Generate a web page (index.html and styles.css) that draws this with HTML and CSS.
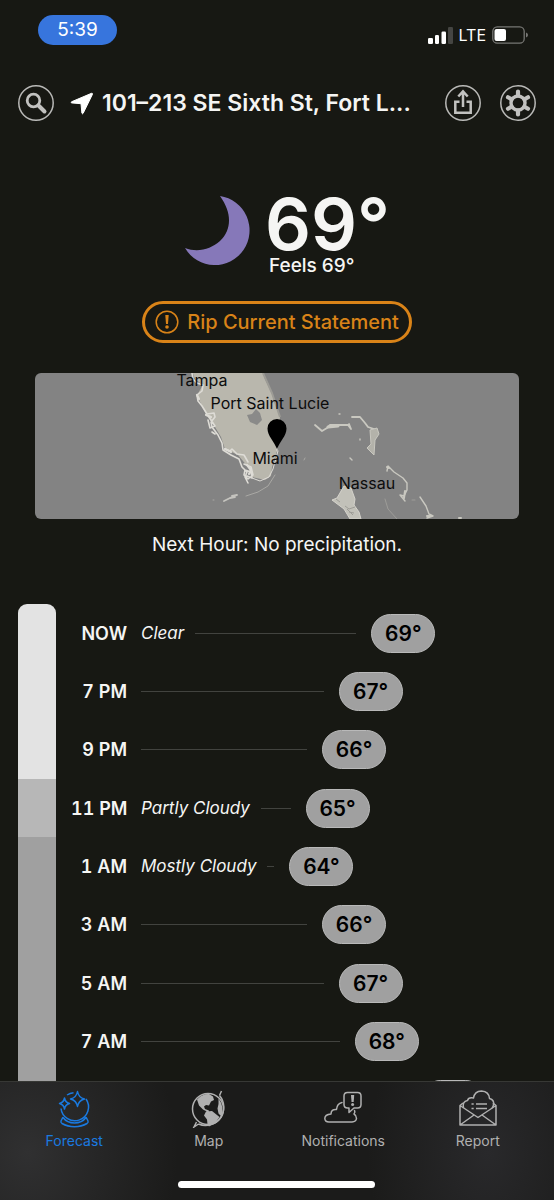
FILE: index.html
```html
<!DOCTYPE html>
<html lang="en">
<head>
<meta charset="utf-8">
<meta name="viewport" content="width=device-width, initial-scale=1">
<title>Forecast</title>
<link rel="stylesheet" href="styles.css">
</head>
<body>
<div class="app">
  <div class="status">
    <span class="clock">5:39</span>
    <div class="signals">
      <svg width="25" height="17" viewBox="0 0 25 17" aria-hidden="true">
        <rect x="0" y="11" width="5" height="6" rx="1.3" fill="#fff"/>
        <rect x="7" y="8" width="4" height="9" rx="1.3" fill="#fff"/>
        <rect x="13.500" y="4.500" width="4.500" height="12.500" rx="1.300" fill="#fff"/>
        <rect x="20" y="0" width="5" height="17" rx="1.3" fill="#454542"/>
      </svg>
      <span>LTE</span>
      <svg width="36" height="18" viewBox="0 0 36 18" aria-hidden="true">
        <rect x=".8" y=".8" width="31.400" height="16.400" rx="4.500" fill="none" stroke="#777774" stroke-width="1.300"/>
        <rect x="2.500" y="3" width="11.500" height="12" rx="2" fill="#fff"/>
        <path d="M34 6.500q2 .8 2 2.500t-2 2.500z" fill="#777774"/>
      </svg>
    </div>
  </div>

  <header class="top">
    <button class="round" aria-label="Search">
      <svg width="36" height="36" viewBox="0 0 36 36" aria-hidden="true"><circle cx="18" cy="18" r="17.200" fill="none" stroke="#b9b9b7" stroke-width="1.500"/><circle cx="15.500" cy="15.500" r="6.300" fill="none" stroke="#c2c2c0" stroke-width="2.800"/><path d="M20.500 20.500l6 6" stroke="#c2c2c0" stroke-width="4" stroke-linecap="round"/></svg>
    </button>
    <h1 class="place">
      <svg width="23" height="23" viewBox="0 0 23 23" aria-hidden="true"><path d="M21.500 1.300L1.500 9.800q-1 .7.200 1.100l9.300.8.900 9.500q.6 1.200 1.300 0L22.500 2.200q.2-1.100-1-.9z" fill="#fff" stroke="#fff"/></svg>
      <span>101–213 SE Sixth St, Fort L...</span>
    </h1>
    <button class="round" aria-label="Share">
      <svg width="36" height="36" viewBox="0 0 36 36" aria-hidden="true"><circle cx="18" cy="18" r="17.200" fill="none" stroke="#b9b9b7" stroke-width="1.500"/><path d="M14.500 16.800h-4.200v11h15.400v-11h-4.200M18 22V7M13.300 11.500L18 6.300l4.700 5.200" fill="none" stroke="#c2c2c0" stroke-width="2.500"/></svg>
    </button>
    <button class="round" aria-label="Settings">
      <svg width="36" height="36" viewBox="0 0 36 36" aria-hidden="true"><circle cx="18" cy="18" r="17.200" fill="none" stroke="#b9b9b7" stroke-width="1.500"/><g stroke="#c2c2c0" stroke-width="4.200" stroke-linecap="round"><path d="M18 6.500v4M18 25.500v4M8 12.250l3.500 2M24.500 21.750l3.500 2M8 23.750l3.500-2M24.500 14.250l3.500-2"/></g><circle cx="18" cy="18" r="7" fill="none" stroke="#c2c2c0" stroke-width="3.400"/></svg>
    </button>
  </header>

  <main class="content">
    <section class="current">
      <svg class="moon" width="68" height="72" viewBox="0 0 68 72" role="img" aria-label="Clear night"><path d="M36 0A34.700 34.700 0 1 1 1 52C14 57 27 53 36 45C48 33 48 17 36 0Z" fill="#8678b9"/></svg>
      <div class="reading">
        <span class="temp">69°</span>
        <span class="feels">Feels 69°</span>
      </div>
    </section>

    <button class="alert">
      <svg width="24" height="24" viewBox="0 0 24 24" aria-hidden="true"><circle cx="12" cy="12" r="10.800" fill="none" stroke="#d98318" stroke-width="1.500"/><path d="M10.300 5h3.400l-.7 9h-2z" fill="#d98318"/><circle cx="12" cy="17" r="1.800" fill="#d98318"/></svg>
      <span>Rip Current Statement</span>
    </button>

    <section class="radar">
      <svg class="map" viewBox="0 0 484 146" preserveAspectRatio="xMidYMid slice" role="img" aria-label="Precipitation map">
        <rect width="484" height="146" fill="#838383"/>
        <path d="M157-2L160 6 168 12 162 22 167 33 172 43 180 54 186 64 190 76 203 82 213 94 217 104 230 107 236 103 237 94 242 78 243 62 245 44 237 21 230 6 227-2z" fill="#b9b7ad"/>
        <path d="M228 0L237 20 245 44" fill="none" stroke="#9d9c96" stroke-width="2"/>
        <g fill="none" stroke="#dedcd6" stroke-linejoin="round" stroke-linecap="round">
          <path stroke-width="1.600" d="M157 0l1 6 4 4 6 2-1 6-5 4 1 6 4 5 5 8 7-1 1 4-4 5 1 5 6 8 4 8 1 7 8 5 8 4 3 8 5 5-2 5 3 6M190 76l5 2 2-2 5 5 7 1 4 7M174 44l6 9-5 2-2-8M177 59l3 2M209 91l7 3 2 8-5 4-4-4 1-5 6 2 1 6-5-2"/>
          <path stroke-width="2.200" d="M162 22l2 4M190 76l6 3M212 92l4 5-2 4M171 42l5 2"/>
          <path stroke-width="1" d="M217 105l8 3 9-4 4-8 5-18M242 70l0 8"/>
          <path stroke="#a9a8a4" stroke-width="1" d="M211 123l12-4 10-6 7-11"/>
          <path stroke="#c4c3be" stroke-width="1.800" d="M189 128l6-3 5-1M197 123l5-1"/>
          <path stroke="#a9a8a4" stroke-width="1" d="M178 127h1M269 87l1-2"/>
        </g>
        <path d="M212 42l5-1 4-5 4 4 2 7-5 5-7-3z" fill="#8a8a89"/>
        <g fill="none" stroke="#c9c8c0" stroke-linejoin="round" stroke-linecap="round">
          <path stroke-width="1.800" d="M280 52l7 6 5-3 3-3 18 0 3 4-2-5M317 44l8 0 5 6 3 4 6 2"/>
          <path stroke-width="3" d="M293 54l10-1"/>
          <path stroke-width="1.400" d="M352 98l1-5 6 6 9 6 4 5 0 7-3 6-4-1 5 6M385 124l6 9 3 8 4 2-6 2M315 85l2 2M325 66v1M304 41h1"/>
          <path stroke="#9d9c98" stroke-width="1" d="M350 126l3 10 9 10M377 127h3"/>
          <path stroke-width="2" d="M370 118l-1 7M392 143h4M424 145h2M352 94l2 1"/>
        </g>
        <path d="M335 57l7-2 2 6-4 6-1 15-7-7 4-4z" fill="#b3b2aa" stroke="#c9c8c0"/>
        <path d="M309 113l7 2 4 11-1 6 5 7 2 7h-11l-6-10-12-9 5-2z" fill="#c2c1b9" stroke="#d5d3cc"/>
        <path d="M310 133l4 3 6-2M314 139l5 1M312 136l6 6M301 126l4 3" fill="none" stroke="#9d9c96"/>
        <path d="M242 76C239 68 232.500 63 232.500 55.500a9.500 9.500 0 0 1 19 0C251.500 63 245 68 242 76z" fill="#000"/>
        <g class="cities">
          <text x="167" y="13">Tampa</text>
          <text x="235" y="36">Port Saint Lucie</text>
          <text x="240" y="91">Miami</text>
          <text x="332" y="116">Nassau</text>
        </g>
      </svg>
      <p class="next-hour">Next Hour: No precipitation.</p>
    </section>

    <section class="hours">
      <div class="sky" aria-hidden="true"><i class="clear"></i><i class="partly"></i><i class="mostly"></i></div>
      <ol class="rows">
        <li><time>NOW</time><div class="track"><em>Clear</em><hr><span class="pill" style="margin-right:25.3%">69°</span></div></li>
        <li><time>7 PM</time><div class="track"><hr><span class="pill" style="margin-right:33.6%">67°</span></div></li>
        <li><time>9 PM</time><div class="track"><hr><span class="pill" style="margin-right:37.8%">66°</span></div></li>
        <li><time>11 PM</time><div class="track"><em>Partly Cloudy</em><hr><span class="pill" style="margin-right:42%">65°</span></div></li>
        <li><time>1 AM</time><div class="track"><em>Mostly Cloudy</em><hr><span class="pill" style="margin-right:46.1%">64°</span></div></li>
        <li><time>3 AM</time><div class="track"><hr><span class="pill" style="margin-right:37.8%">66°</span></div></li>
        <li><time>5 AM</time><div class="track"><hr><span class="pill" style="margin-right:33.6%">67°</span></div></li>
        <li><time>7 AM</time><div class="track"><hr><span class="pill" style="margin-right:29.5%">68°</span></div></li>
        <li aria-hidden="true"><time></time><div class="track"><hr><span class="pill" style="margin-right:12.8%"></span></div></li>
      </ol>
    </section>
  </main>

  <nav class="tabs">
    <div class="tab-row">
      <a class="tab active" href="#forecast">
        <svg width="38" height="38" viewBox="0 0 38 38" aria-hidden="true"><g fill="none" stroke="currentColor" stroke-width="1.500" stroke-linejoin="round"><path d="M12 5Q15 3 18.500 2.700M31 9a13.800 13.800 0 1 1-25 9.500M8 27l-2 4q-.5 1.500 1 2.500 5.500 3.200 12.500 3.200t12.500-3.200q1.500-1 1-2.500l-2-4M8 27.500q4 5.500 11.500 5.500t11.500-5.500"/><path d="M22.500 1.500q1 6 7 7.500-6 1.500-7 7.500-1-6-7-7.500 6-1.500 7-7.500zM9.500 8q.8 4.500 5 5.500-4.200 1-5 5.500-.8-4.500-5-5.500 4.200-1 5-5.500z"/></g></svg>
        <span>Forecast</span>
      </a>
      <a class="tab" href="#map">
        <svg width="38" height="38" viewBox="0 0 38 38" aria-hidden="true"><circle cx="18" cy="19" r="15.500" fill="none" stroke="currentColor" stroke-width="1.500"/><path d="M29.500 5.500A18.200 18.200 0 0 1 8.500 34M29.500 5.500l2-4.500M8.500 34l-4.500 3 2.500-5" fill="none" stroke="currentColor" stroke-width="1.500"/><path d="M8 8.500Q13 3.500 19 4l4 2.500 1 3.500-3 1.500-2 4-3-.5-2 1.500 1 2.500 4 1.500-1 1.500-5-2.500-4-4-2-6zM16 21.500l6-.5 5 4 2.500 2-3.500 5-7 4.500-1.500-2-.5-5-3-4zM28.500 8.500q6 8 3 18l-3-3-1-5 1-4.500z" fill="currentColor"/></svg>
        <span>Map</span>
      </a>
      <a class="tab" href="#notifications">
        <svg width="38" height="38" viewBox="0 0 38 38" aria-hidden="true"><g fill="none" stroke="currentColor" stroke-width="1.500" stroke-linejoin="round" stroke-linecap="round"><path d="M18 12.500q-5 1-5.500 7-5.500-.5-5.500 4.500Q.8 24.500.8 28.500q.2 3.500 4.200 3.500h23q4-.2 4.500-3.500 0-3-2.500-4.500 1.500-2 .5-3.500"/><path d="M23.500 2.500h10q3.500 0 3.500 3.500v8.500q0 3.500-3.500 3.500H30l-5 4.500V18h-1.500q-3.500 0-3.500-3.500V6q0-3.500 3.500-3.500z"/></g><path d="M27 5h3.200l-.5 7h-2.200z" fill="currentColor"/><circle cx="28.600" cy="14.500" r="1.500" fill="currentColor"/></svg>
        <span>Notifications</span>
      </a>
      <a class="tab" href="#report">
        <svg width="38" height="38" viewBox="0 0 38 38" aria-hidden="true"><g fill="none" stroke="currentColor" stroke-width="1.500" stroke-linejoin="round"><path d="M4 13L1 15.500V35h36V15.500L34 13M1 15.500L19 27.500l18-12M1 35l14-10M37 35L23 25"/><path d="M4.500 18Q3 11.500 8.500 10.500 9.500 7 14.500 8 15.500 1.200 22.500 1q7.500.5 8 7.500 5 1.500 4 6 0 2-1.500 3.500"/></g><path d="M17 14h11M17 18.500h11M12.500 14h2.200M12.500 18.500h2.200" fill="none" stroke="currentColor" stroke-width="1.700"/></svg>
        <span>Report</span>
      </a>
    </div>
    <div class="home-indicator"></div>
  </nav>
</div>
</body>
</html>
```
FILE: styles.css
```css
* { box-sizing: border-box; }
body {
  margin: 0;
  background: #171813;
  color: #f5f5f3;
  font-family: Inter, "Liberation Sans", sans-serif;
}
button { font: inherit; color: inherit; background: none; border: 0; padding: 0; cursor: pointer; }
svg { display: block; flex: none; }

.app { display: flex; flex-direction: column; height: 100vh; overflow: hidden; }

.status { display: flex; justify-content: space-between; padding: 15px 26px 0 38px; }
.clock {
  width: 79px;
  border-radius: 15px;
  background: #3775dd;
  color: #fff;
  font-size: 19px;
  line-height: 30px;
  text-align: center;
}
.signals { display: flex; align-items: center; gap: 6px; padding-top: 10px; font-size: 16px; line-height: 20px; color: #fff; }

.top { display: flex; align-items: center; padding: 40px 18px 0; gap: 19px; }
.round { flex: none; border-radius: 50%; }
.place {
  display: flex;
  flex: 1;
  align-items: center;
  gap: 9px;
  min-width: 0;
  margin: 0;
  font-size: 23px;
  font-weight: 600;
  line-height: 36px;
  white-space: nowrap;
}
.place svg { margin-left: -3px; }

.content { flex: 1; min-height: 0; overflow: hidden; }
.current { display: flex; justify-content: center; gap: 13px; padding: 74px 0 0 20px; }
.moon { margin-top: 1px; }
.reading { display: flex; flex-direction: column; }
.temp { font-size: 72px; font-weight: 600; line-height: 58px; }
.feels { padding: 1px 0 0 4px; font-size: 19px; font-weight: 500; line-height: 24px; }

.alert {
  display: flex;
  align-items: center;
  gap: 8px;
  width: max-content;
  margin: 23px auto 0;
  padding: 0 10px;
  border: 3px solid #d98318;
  border-radius: 21px;
  color: #d98318;
  font-size: 20px;
  font-weight: 500;
  line-height: 36px;
}

.radar { padding: 30px 35px 0; }
.map { width: 100%; height: 146px; border-radius: 6px; }
.cities { font-size: 16px; fill: #0c0c0c; text-anchor: middle; }
.next-hour { margin: 14px 0 0; font-size: 19px; line-height: 24px; text-align: center; }

.hours { display: flex; gap: 15px; min-height: 525px; margin-top: 47px; padding: 0 19px 0 18px; }
.sky { display: grid; grid-template-rows: 3fr 1fr 5fr; flex: none; width: 38px; border-radius: 9px 9px 0 0; overflow: hidden; }
.clear { background: #e3e3e3; }
.partly { background: #b7b7b7; }
.mostly { background: #a0a0a0; }
.rows { display: grid; grid-template-rows: repeat(9, 1fr); flex: 1; margin: 0; padding: 0; list-style: none; }
.rows li { display: flex; align-items: center; gap: 14px; }
.rows time { flex: none; width: 56px; font-size: 18px; font-weight: 600; font-variant-numeric: tabular-nums; text-align: right; white-space: nowrap; }
.track { display: flex; flex: 1; align-items: center; }
.track em { margin-right: 11px; font-size: 17px; white-space: nowrap; }
.track hr { flex: 1; height: 1px; margin: 0 15px 0 0; border: 0; background: #42433f; }
.pill {
  flex: none;
  width: 64px;
  height: 39px;
  border: 1px solid #b9b9b9;
  border-radius: 20px;
  background: #a0a0a0;
  color: #000;
  font-size: 21px;
  font-weight: 600;
  line-height: 37px;
  text-align: center;
}

.tabs {
  flex: none;
  padding: 8px 9px 12px 7px;
  border-top: 1px solid #373835;
  background:
    radial-gradient(ellipse 150px 170px at 5% 60%, #303031, transparent),
    radial-gradient(ellipse 120px 160px at 88% 60%, #29292b, transparent),
    #1b1b1a;
}
.tab-row { display: flex; }
.tab { display: flex; flex: 1; flex-direction: column; align-items: center; gap: 3px; color: #b0b0b0; font-size: 14px; line-height: 20px; text-decoration: none; }
.tab.active { color: #1a7ae0; }
.home-indicator { width: 197px; height: 7px; margin: 30px auto 0; border-radius: 4px; background: #fff; }
```
